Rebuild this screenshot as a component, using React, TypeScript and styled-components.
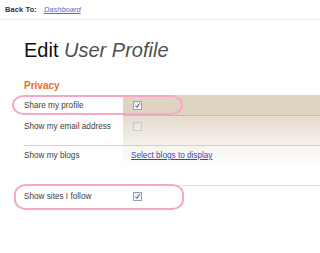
import styled, { createGlobalStyle } from 'styled-components';

const GlobalStyle = createGlobalStyle`
    body {
        margin: 0;
        background: #fff;
        font-family: 'Liberation Sans', Arial, sans-serif;
    }
`;

type Shade = 'tan' | 'fade' | 'light' | 'none';

const shades: Record<Shade, string> = {
    tan: '#dfd3c1',
    fade: 'linear-gradient(to bottom, #e6dccf 0%, #f4f0eb 100%)',
    light: 'linear-gradient(to bottom, #f7f4f0 0px, #ffffff 22px)',
    none: 'transparent',
};

export default function App() {
    return (
        <>
            <GlobalStyle />
            <TopBar>
                <strong>Back To:</strong>
                <a href="#">Dashboard</a>
            </TopBar>

            <Content>
                <Title>
                    Edit <em>User Profile</em>
                </Title>

                <SectionTitle>Privacy</SectionTitle>

                <Settings>
                    <Row $height={21} $line="value" $lineColor="#c9baa6">
                        <Label>Share my profile</Label>
                        <Value $shade="tan">
                            <Check $checked />
                        </Value>
                        <Circled style={{ top: 0, left: -12, width: 171, height: 20 }} />
                    </Row>

                    <Row $height={29} $line="full" $lineColor="#d9cfc4">
                        <Label>Show my email address</Label>
                        <Value $shade="fade">
                            <Check $disabled />
                        </Value>
                    </Row>

                    <Row $height={39} $line="full" $lineColor="#e6e1db" $pad={5}>
                        <Label>Show my blogs</Label>
                        <Value $shade="light">
                            <BlogsLink href="#">Select blogs to display</BlogsLink>
                        </Value>
                    </Row>

                    <Row $height={24} $line="none" $lineColor="transparent">
                        <Label>Show sites I follow</Label>
                        <Value $shade="none">
                            <Check $checked />
                        </Value>
                        <Circled style={{ top: -2, left: -10, width: 170, height: 26 }} />
                    </Row>
                </Settings>
            </Content>
        </>
    );
}

function Check(props: { $checked?: boolean; $disabled?: boolean }) {
    return (
        <CheckBox $disabled={props.$disabled}>
            {props.$checked && (
                <svg width="7" height="7" viewBox="0 0 7 7">
                    <path d="M1.4 3.8 L2.9 5.3 L5.6 1.4" fill="none" stroke="#2a3a8a" strokeWidth="1" />
                </svg>
            )}
        </CheckBox>
    );
}

const TopBar = styled.div`
    display: flex;
    align-items: center;
    gap: 7px;
    height: 19px;
    padding: 0 5px;
    border-bottom: 1px solid #fde6d8;
    font-size: 7.5px;
    color: #333;

    strong {
        font-weight: bold;
        letter-spacing: 0.1px;
    }

    a {
        color: #5566cc;
        font-style: italic;
        text-decoration: underline;
    }
`;

const Content = styled.div`
    padding-left: 24px;
`;

const Title = styled.h1`
    margin: 18px 0 0;
    font-size: 20px;
    line-height: 24px;
    font-weight: normal;
    color: #111;

    em {
        color: #505050;
        font-style: italic;
    }
`;

const SectionTitle = styled.h2`
    margin: 18px 0 0;
    font-size: 10px;
    line-height: 12px;
    font-weight: bold;
    color: #f0691f;
`;

const Settings = styled.div`
    margin-top: 3px;
`;

const Row = styled.div<{ $height: number; $line: 'value' | 'full' | 'none'; $lineColor: string; $pad?: number }>`
    position: relative;
    display: grid;
    grid-template-columns: 99px 1fr;
    min-height: ${(p) => p.$height}px;
    border-bottom: ${(p) => (p.$line === 'full' ? `1px solid ${p.$lineColor}` : 'none')};

    > div {
        padding-top: ${(p) => p.$pad ?? 6}px;
    }

    > div:nth-child(2) {
        border-bottom: ${(p) => (p.$line === 'value' ? `1px solid ${p.$lineColor}` : 'none')};
    }
`;

const Label = styled.div`
    font-size: 8.2px;
    line-height: 9px;
    color: #443d36;
`;

const Value = styled.div<{ $shade: Shade }>`
    display: flex;
    align-items: flex-start;
    padding-left: 10px;
    background: ${(p) => shades[p.$shade]};
`;

const CheckBox = styled.span<{ $disabled?: boolean }>`
    display: flex;
    align-items: center;
    justify-content: center;
    box-sizing: border-box;
    width: 9px;
    height: 9px;
    border: 1px solid ${(p) => (p.$disabled ? '#c8c8c8' : '#98a2b3')};
    background: ${(p) =>
        p.$disabled ? 'linear-gradient(#e2e2e2, #f0f0f0)' : 'linear-gradient(#e4e8ee, #fbfbfc)'};
`;

const BlogsLink = styled.a`
    margin-left: -2px;
    font-size: 8.2px;
    line-height: 9px;
    color: #3547b8;
    text-decoration: underline;
`;

const Circled = styled.span`
    position: absolute;
    box-sizing: border-box;
    border: 2.5px solid #f8a5c6;
    border-radius: 12px / 10px;
    pointer-events: none;
`;
